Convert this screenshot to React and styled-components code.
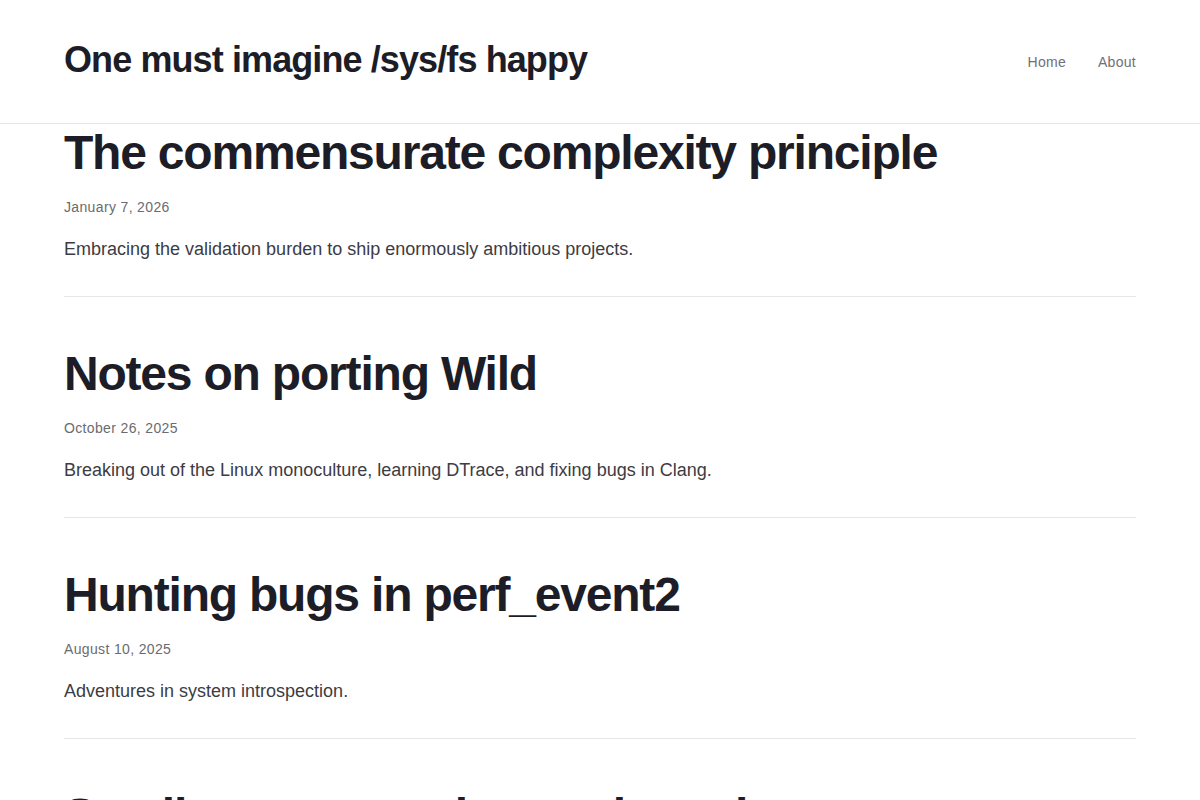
import React from "react";
import styled, { createGlobalStyle } from "styled-components";

const Global = createGlobalStyle`
  html, body { margin: 0; padding: 0; background: #ffffff; }
  body {
    font-family: "Liberation Sans", Arial, Helvetica, sans-serif;
    color: #1c1d26;
    -webkit-font-smoothing: antialiased;
  }
  * { box-sizing: border-box; }
  a { text-decoration: none; color: inherit; }
`;

const Header = styled.header`
  border-bottom: 1px solid #e6e6e6;
`;

const HeaderInner = styled.div`
  height: 123px;
  padding: 0 64px;
  display: flex;
  align-items: center;
  justify-content: space-between;
`;

const SiteTitle = styled.a`
  font-size: 36px;
  font-weight: 700;
  letter-spacing: -0.025em;
  line-height: 1.2;
  color: #1c1d26;
  margin-top: -4px;
`;

const Nav = styled.nav`
  display: flex;
  gap: 32px;
`;

const NavLink = styled.a`
  font-size: 14px;
  letter-spacing: 0.02em;
  color: #707076;
`;

const Main = styled.main`
  padding: 0 64px;
`;

const Post = styled.article`
  padding: ${(p) => (p.$first ? "0" : "48px")} 0 32.6px;
  border-bottom: 1px solid #e6e6e6;
`;

const PostTitle = styled.h2`
  margin: 0 0 15px;
  font-size: 48px;
  line-height: 1.2;
  font-weight: 700;
  letter-spacing: -0.025em;
  color: #1c1d26;
`;

const PostDate = styled.time`
  display: block;
  font-size: 14px;
  line-height: 1.5;
  letter-spacing: 0.025em;
  color: #6b6b70;
  margin-bottom: 17px;
`;

const Excerpt = styled.p`
  margin: 0;
  font-size: 18px;
  line-height: 1.6;
  color: #3c3c44;
`;

const posts = [
  {
    title: "The commensurate complexity principle",
    date: "January 7, 2026",
    excerpt: "Embracing the validation burden to ship enormously ambitious projects.",
  },
  {
    title: "Notes on porting Wild",
    date: "October 26, 2025",
    excerpt: "Breaking out of the Linux monoculture, learning DTrace, and fixing bugs in Clang.",
  },
  {
    title: "Hunting bugs in perf_event2",
    date: "August 10, 2025",
    excerpt: "Adventures in system introspection.",
  },
  {
    title: "Small memory, unknown kernels",
    date: "May 2, 2025",
    excerpt: "Notes from the bottom of the stack.",
  },
];

export default function App() {
  return (
    <>
      <Global />
      <Header>
        <HeaderInner>
          <SiteTitle href="#">One must imagine /sys/fs happy</SiteTitle>
          <Nav>
            <NavLink href="#">Home</NavLink>
            <NavLink href="#">About</NavLink>
          </Nav>
        </HeaderInner>
      </Header>
      <Main>
        {posts.map((p, i) => (
          <Post key={p.title} $first={i === 0}>
            <PostTitle>{p.title}</PostTitle>
            <PostDate>{p.date}</PostDate>
            <Excerpt>{p.excerpt}</Excerpt>
          </Post>
        ))}
      </Main>
    </>
  );
}
